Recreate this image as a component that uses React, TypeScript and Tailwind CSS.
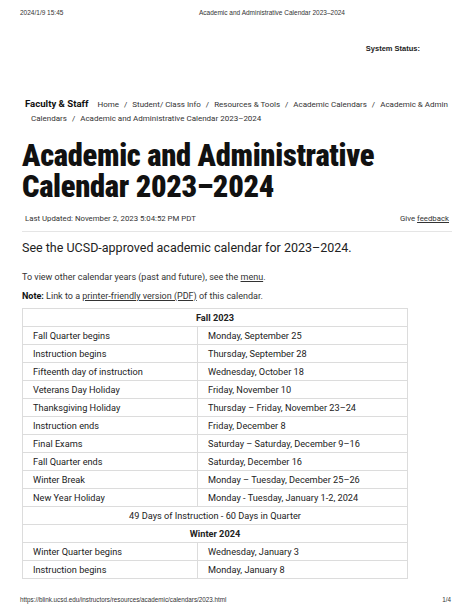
const fall = [
  ["Fall Quarter begins", "Monday, September 25"],
  ["Instruction begins", "Thursday, September 28"],
  ["Fifteenth day of instruction", "Wednesday, October 18"],
  ["Veterans Day Holiday", "Friday, November 10"],
  ["Thanksgiving Holiday", "Thursday – Friday, November 23–24"],
  ["Instruction ends", "Friday, December 8"],
  ["Final Exams", "Saturday – Saturday, December 9–16"],
  ["Fall Quarter ends", "Saturday, December 16"],
  ["Winter Break", "Monday – Tuesday, December 25–26"],
  ["New Year Holiday", "Monday - Tuesday, January 1-2, 2024"],
];

const winter = [
  ["Winter Quarter begins", "Wednesday, January 3"],
  ["Instruction begins", "Monday, January 8"],
];

const crumbs = ["Home", "Student/ Class Info", "Resources & Tools", "Academic Calendars"];

const Row = ({ a, b }: { a: string; b: string }) => (
  <tr>
    <td className="h-[18px] w-[175px] border border-[#dcdcdc] pl-[10px]">{a}</td>
    <td className="h-[18px] border border-[#dcdcdc] pl-[10px]">{b}</td>
  </tr>
);

const App = () => {
  return (
    <div className="w-[474px] h-[613px] bg-white flex flex-col overflow-hidden font-['Roboto',sans-serif] text-[#222]">
      {/* print header */}
      <div className="flex items-center h-[26px] pl-[20px] text-[6.5px] text-[#333] font-['Liberation_Sans',sans-serif]">
        <span className="w-[179px]">2024/1/9 15:45</span>
        <span>Academic and Administrative Calendar 2023–2024</span>
      </div>

      <div className="flex justify-end pr-[54px] mt-[17px] text-[7.5px] font-bold font-['Liberation_Sans',sans-serif]">
        System Status:
      </div>

      {/* breadcrumb */}
      <div className="mt-[43px] pl-[25px] text-[8px] leading-[14px] text-[#333] whitespace-nowrap">
        <div className="flex items-baseline">
          <span className="text-[9.6px] font-bold text-[#111] mr-[9px]">Faculty &amp; Staff</span>
          {crumbs.map((c) => (
            <span key={c}>
              {c}
              <span className="mx-[5px]">/</span>
            </span>
          ))}
          <span>Academic &amp; Admin</span>
        </div>
        <div className="pl-[6px]">
          Calendars<span className="mx-[5px]">/</span>Academic and Administrative Calendar 2023–2024
        </div>
      </div>

      <h1 className="mt-[14px] pl-[22px] text-[30.5px] leading-[31px] font-black tracking-[-0.3px] text-[#111] font-['Liberation_Sans_Narrow','Roboto_Condensed',sans-serif]">
        Academic and Administrative
        <br />
        Calendar 2023–2024
      </h1>

      <div className="mx-[22px] mt-[11px] flex justify-between pl-[3px] pr-[3px] pb-[6px] border-b border-[#e5e5e5] text-[7.8px] text-[#333]">
        <span>Last Updated: November 2, 2023 5:04:52 PM PDT</span>
        <span>
          Give <span className="underline">feedback</span>
        </span>
      </div>

      <p className="mt-[7px] pl-[22px] text-[12.5px] leading-[18px] text-[#222]">
        See the UCSD-approved academic calendar for 2023–2024.
      </p>
      <p className="mt-[14px] pl-[22px] text-[9px] leading-[12px] text-[#333]">
        To view other calendar years (past and future), see the <span className="underline">menu</span>.
      </p>
      <p className="mt-[7px] pl-[22px] text-[9px] leading-[12px] text-[#333]">
        <b className="text-[#111]">Note:</b> Link to a{" "}
        <span className="underline">printer-friendly version (PDF)</span> of this calendar.
      </p>

      <table className="mt-[6px] ml-[22px] w-[386px] border-collapse text-[9.2px] text-[#222]">
        <tbody>
          <tr>
            <td colSpan={2} className="h-[18px] border border-[#dcdcdc] text-center font-bold">
              Fall 2023
            </td>
          </tr>
          {fall.map(([a, b]) => (
            <Row key={a} a={a} b={b} />
          ))}
          <tr>
            <td colSpan={2} className="h-[18px] border border-[#dcdcdc] text-center">
              49 Days of Instruction - 60 Days in Quarter
            </td>
          </tr>
          <tr>
            <td colSpan={2} className="h-[18px] border border-[#dcdcdc] text-center font-bold">
              Winter 2024
            </td>
          </tr>
          {winter.map(([a, b]) => (
            <Row key={a + b} a={a} b={b} />
          ))}
        </tbody>
      </table>

      {/* print footer */}
      <div className="mt-auto mb-[9px] flex justify-between pl-[20px] pr-[23px] text-[6.3px] text-[#333] font-['Liberation_Sans',sans-serif]">
        <span>https://blink.ucsd.edu/instructors/resources/academic/calendars/2023.html</span>
        <span>1/4</span>
      </div>
    </div>
  );
};

export default App;
